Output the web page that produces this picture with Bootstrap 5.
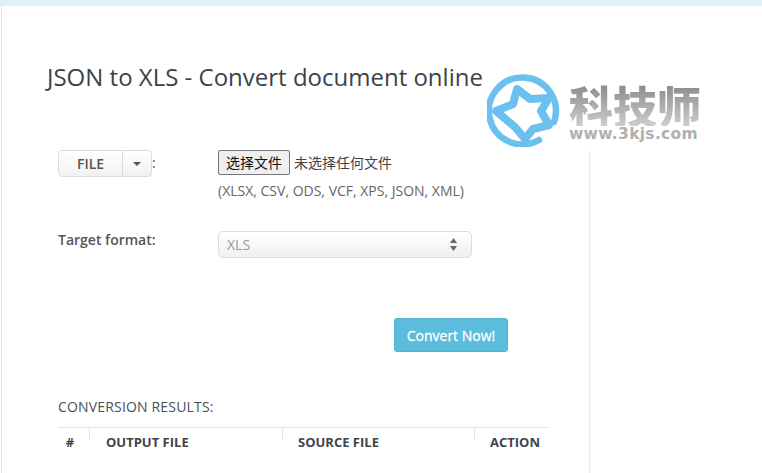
<!DOCTYPE html>
<html lang="en">
<head>
<meta charset="utf-8">
<title>JSON to XLS</title>
<link href="https://cdn.jsdelivr.net/npm/bootstrap@5.3.0/dist/css/bootstrap.min.css" rel="stylesheet">
<style>
html,body{height:473px;overflow:hidden;background:#fff}
body{font-family:"Open Sans","Noto Sans CJK SC",sans-serif;font-size:14px;color:#555;position:relative}
.topstrip{height:6px;background:#def1f9}
.shell{border-left:1px solid #e4e6e8;margin-left:1px;height:467px;display:flex;flex-direction:column}
.page-title{font-size:24px;font-weight:400;color:#3c4348;line-height:32px;margin:0;padding:55px 0 0 45px;height:104px}
.body-row{display:flex;flex:1;min-height:0}
.main-col{width:588px;flex:none;border-right:1px solid #e8e8e8;padding:40px 40px 0 56px}
.form-line{display:flex}
.label-col{width:160px;flex:none}
.file-group{display:inline-flex;height:27px;border:1px solid #d9dcdf;border-radius:4px;background:linear-gradient(#fff,#f0f1f2);color:#555;font-size:14px;font-weight:600;align-items:center}
.file-main{width:64px;text-align:center;border-right:1px solid #d9dcdf;line-height:25px}
.file-caret{width:28px;display:flex;justify-content:center}
.file-caret i{border-top:4px solid #555;border-left:4px solid transparent;border-right:4px solid transparent}
.colon-mark{line-height:26px;color:#555}
.native-file{font-family:"Noto Sans CJK SC",sans-serif;font-size:14px;color:#444;display:flex;align-items:center;height:25px}
.native-btn{background:#efefef;border:1px solid #767676;border-radius:2px;color:#111;width:72px;height:25px;padding:0;font-size:14px;line-height:21px;margin-right:4px}
.hint-text{margin-top:7px;line-height:18px;color:#666}
.target-line{margin-top:31px}
.fake-select{width:254px;height:27px;border:1px solid #d9dcdf;border-radius:5px;background:linear-gradient(#fff,#eef0f1);color:#999;padding-left:8px;line-height:25px;font-size:14px;position:relative}
.updown{position:absolute;right:14px;top:6px;width:7px}
.label-text{line-height:18px;color:#555;font-weight:600}
.convert-wrap{display:flex;justify-content:flex-end;width:450px;margin-top:60px}
.convert-btn{width:114px;height:34px;background:#5bbcdb;border:1px solid #54b3d1;border-radius:3px;color:#fff;font-size:14px;font-weight:400;padding:0;-webkit-text-stroke:.3px #fff}
.results-head{margin:46px 0 0;font-size:14px;font-weight:400;line-height:18px;color:#4a4f55;text-transform:uppercase;letter-spacing:.17px}
.results-table{width:490px;margin-top:11px;border-top:1px solid #e2e4e6;display:flex;height:30px;font-size:13px;font-weight:700;color:#3f444a}
.results-table>div{border-left:1px solid #e2e4e6;height:12px;padding-top:6px;line-height:16px;white-space:nowrap}
.results-table>div:first-child{border-left:0;width:31px;text-align:center;padding-right:7px}
.th-output{width:193px;padding-left:16px}
.th-source{width:192px;padding-left:15px}
.th-action{width:74px;padding-left:15px}
.logo-wrap{position:absolute;left:484px;top:71px;width:222px;height:80px;background:#fff;display:flex;align-items:flex-start;gap:8px;padding:2px 0 0 3px}
.logo-text{display:flex;flex-direction:column;margin-top:11px}
.logo-cn{font-family:"Noto Sans CJK SC",sans-serif;font-weight:900;font-size:44px;line-height:42px;background:linear-gradient(#8a8a8a,#cdcdcd);-webkit-background-clip:text;background-clip:text;color:transparent;width:134px;white-space:nowrap}
.logo-url{font-family:"DejaVu Sans",sans-serif;font-size:15.500px;font-weight:700;color:#b0b0b0;line-height:16px;letter-spacing:.3px;white-space:nowrap}
</style>
</head>
<body>
<div class="topstrip"></div>
<div class="shell">
  <h1 class="page-title">JSON to XLS - Convert document online</h1>
  <div class="body-row">
    <div class="main-col">
      <div class="form-line">
        <div class="label-col d-flex"><span class="file-group"><span class="file-main">FILE</span><span class="file-caret"><i></i></span></span><span class="colon-mark">:</span></div>
        <div>
          <div class="native-file"><button class="native-btn" type="button">选择文件</button>未选择任何文件</div>
          <div class="hint-text">(XLSX, CSV, ODS, VCF, XPS, JSON, XML)</div>
        </div>
      </div>
      <div class="form-line target-line">
        <div class="label-col label-text">Target format:</div>
        <div class="fake-select">XLS
          <svg class="updown" viewBox="0 0 7 13" height="13"><path d="M3.500 0 7 5H0zM0 8h7l-3.500 5z" fill="#666"/></svg>
        </div>
      </div>
      <div class="convert-wrap"><button class="convert-btn" type="button">Convert Now!</button></div>
      <h2 class="results-head">Conversion results:</h2>
      <div class="results-table">
        <div>#</div>
        <div class="th-output">OUTPUT FILE</div>
        <div class="th-source">SOURCE FILE</div>
        <div class="th-action">ACTION</div>
      </div>
    </div>
  </div>
</div>
<div class="logo-wrap">
  <svg width="74" height="74" viewBox="0 0 74 74" fill="none">
    <path d="M67 49A33.500 33.500 0 1 0 52 67" stroke="#6cc0ef" stroke-width="6.500" stroke-linecap="round"/>
    <path d="M30 16 43 26 62 25 54 38 62 52 46 56 38 66 28 54 9 38 26 31z" fill="#fff" stroke="#6cc0ef" stroke-width="8" stroke-linejoin="round"/>
  </svg>
  <div class="logo-text">
    <span class="logo-cn">科技师</span>
    <span class="logo-url">www.3kjs.com</span>
  </div>
</div>
<script src="https://cdn.jsdelivr.net/npm/bootstrap@5.3.0/dist/js/bootstrap.bundle.min.js"></script>
</body>
</html>
